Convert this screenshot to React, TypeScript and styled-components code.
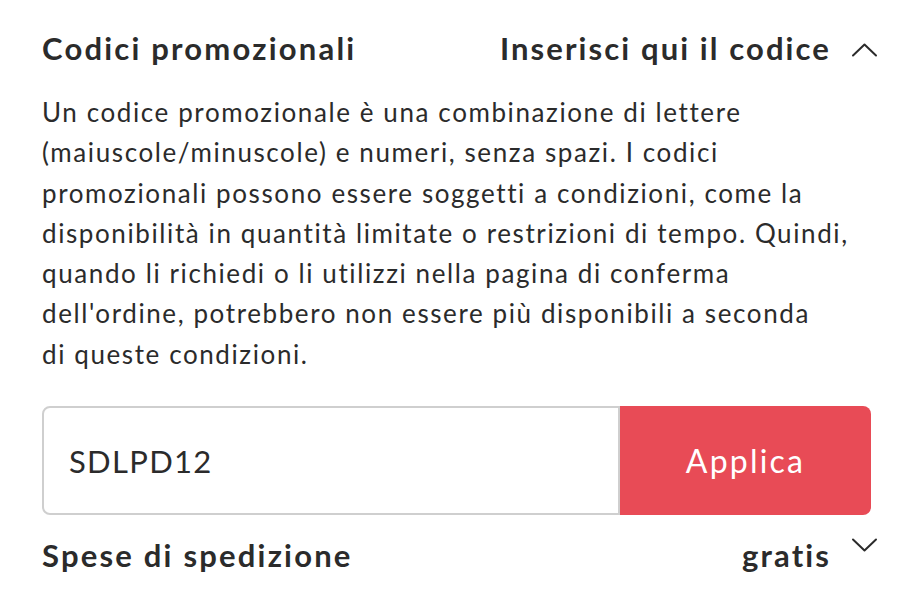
import React from "react";
import styled, { createGlobalStyle } from "styled-components";

const Global = createGlobalStyle`
  html, body { margin: 0; padding: 0; background: #ffffff; }
  body { font-family: Lato, "Open Sans", sans-serif; color: #2b2b2b; }
`;

const Panel = styled.div`
  width: 912px;
  box-sizing: border-box;
  padding: 25px 41px 0 42px;
  display: flex;
  flex-direction: column;
`;

const HeaderRow = styled.div`
  display: flex;
  align-items: center;
  justify-content: space-between;
  height: 46px;
`;

const Title = styled.h2`
  margin: 0;
  font-size: 31px;
  font-weight: 700;
  letter-spacing: 2.2px;
  color: #2b2b2b;
  white-space: nowrap;
`;

const Side = styled.div`
  display: flex;
  align-items: center;
  gap: 20px;
  margin-right: -7px;
`;

const SideLabel = styled.span`
  font-size: 31px;
  font-weight: 700;
  letter-spacing: 2.1px;
  white-space: nowrap;
`;

const Chevron = styled.svg<{ $shift: number }>`
  width: 27px;
  height: 14px;
  transform: translateY(${(p) => p.$shift}px);
  flex: none;
`;

const Description = styled.p`
  margin: 21px 0 0;
  font-size: 26px;
  line-height: 40.3px;
  letter-spacing: 1.6px;
  color: #2b2b2b;
  white-space: nowrap;
`;

const CodeRow = styled.div`
  display: flex;
  height: 109px;
  margin-top: 32px;
`;

const CodeInput = styled.input`
  flex: 1;
  min-width: 0;
  box-sizing: border-box;
  border: 2px solid #cfcfcf;
  border-radius: 8px 0 0 8px;
  padding: 0 0 0 25px;
  font-family: Lato, sans-serif;
  font-size: 31px;
  letter-spacing: 1.3px;
  color: #2b2b2b;
  outline: none;
  background: #fff;
`;

const ApplyButton = styled.button`
  width: 251px;
  border: none;
  border-radius: 0 8px 8px 0;
  background: #e84b56;
  color: #ffffff;
  font-family: Lato, sans-serif;
  font-size: 32px;
  font-weight: 400;
  letter-spacing: 2.2px;
  cursor: pointer;
`;

const ShippingRow = styled(HeaderRow)`
  margin-top: 17px;
`;

function ChevronIcon({ up, shift }: { up?: boolean; shift: number }) {
  return (
    <Chevron $shift={shift} viewBox="0 0 27 14" fill="none">
      <path
        d={up ? "M2 12.5 L13.5 1.5 L25 12.5" : "M2 1.5 L13.5 12.5 L25 1.5"}
        stroke="#2b2b2b"
        strokeWidth="2"
        strokeLinecap="round"
        strokeLinejoin="round"
      />
    </Chevron>
  );
}

export default function App() {
  return (
    <>
      <Global />
      <Panel>
        <HeaderRow>
          <Title>Codici promozionali</Title>
          <Side>
            <SideLabel>Inserisci qui il codice</SideLabel>
            <ChevronIcon up shift={2} />
          </Side>
        </HeaderRow>
        <Description>
          Un codice promozionale è una combinazione di lettere
          <br />
          (maiuscole/minuscole) e numeri, senza spazi. I codici
          <br />
          promozionali possono essere soggetti a condizioni, come la
          <br />
          disponibilità in quantità limitate o restrizioni di tempo. Quindi,
          <br />
          quando li richiedi o li utilizzi nella pagina di conferma
          <br />
          dell'ordine, potrebbero non essere più disponibili a seconda
          <br />
          di queste condizioni.
        </Description>
        <CodeRow>
          <CodeInput defaultValue="SDLPD12" />
          <ApplyButton>Applica</ApplyButton>
        </CodeRow>
        <ShippingRow>
          <Title>Spese di spedizione</Title>
          <Side>
            <SideLabel>gratis</SideLabel>
            <ChevronIcon shift={-10} />
          </Side>
        </ShippingRow>
      </Panel>
    </>
  );
}
